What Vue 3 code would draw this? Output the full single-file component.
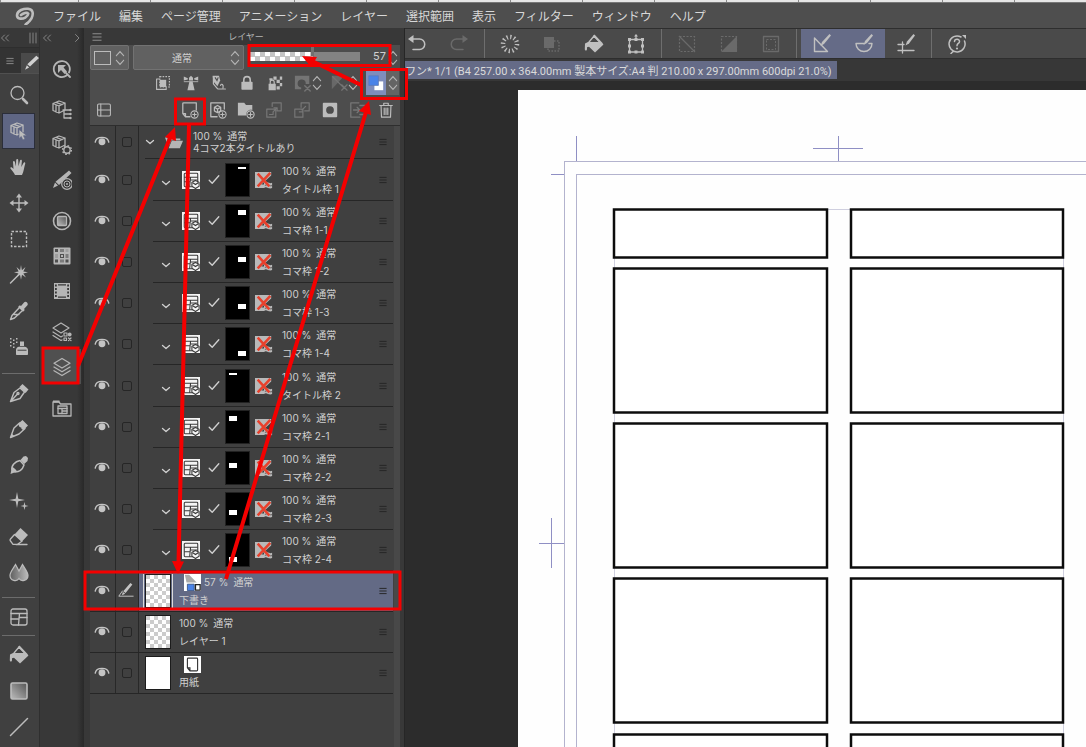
<script setup>
import { ref } from 'vue'

const menus = ['ファイル', '編集', 'ページ管理', 'アニメーション', 'レイヤー', '選択範囲', '表示', 'フィルター', 'ウィンドウ', 'ヘルプ']

const S = (body, width = 1.3) => `<g fill="none" stroke="currentColor" stroke-width="${width}" stroke-linejoin="round" stroke-linecap="round">${body}</g>`
const F = (body) => `<g fill="currentColor">${body}</g>`
const cube = '<path d="M2 4.500 8 2l6 2v7l-6 3-6-2.500zM2 4.500l6 2.500 6-3M8 7v7M5 3.300l6 2.400M5 6v7"/>'

const icons = {
  logo: '<path fill="none" stroke="currentColor" stroke-width="2.600" stroke-linejoin="round" stroke-linecap="round" d="M11 17c5-3 7.500-8 6.500-12C16.500 1 10.500 1 6 3 1 5.500 1 10.500 4.500 11.500c4 .8 8.500-1.800 8.800-4.800C12 5 8.500 6 6 8"/><path fill="currentColor" d="m12.500 14.500 1.500 2-3.500 2-1.500-1z"/>',
  zoom: S('<circle cx="8.500" cy="8" r="6.500"/>') + S('<path d="m14 14 4 4"/>', 2.6),
  object: S(cube) + F('<path d="M10 8.500v9l2.300-2 1.500 3.500 2.200-1-1.500-3.300h3.500z" stroke="#5f6684" stroke-width=".7"/>'),
  hand: F('<path d="M6 18c-.7-2.500-4-5-4.800-7 .5-1.200 1.800-.8 3.300 1L4 5c0-1.400 1.600-1.400 1.900 0l1 4.500L7.200 3c.1-1.400 1.900-1.400 2 0l.3 6.300L11 3.500c.4-1.300 2-1 1.900.4l-.6 6 2.200-4c.7-1.200 2.200-.4 1.700.9-1 2.800-1.400 8.200-3.200 11.200z"/>'),
  move: S('<path d="M10 3v14M3 10h14"/>', 1.4) + F('<path d="m10 .5 3 4H7zM10 19.500l3-4H7zM.5 10l4-3v6zM19.500 10l-4-3v6z"/>'),
  marquee: '<rect x="2.500" y="2.500" width="15" height="15" fill="none" stroke="currentColor" stroke-width="1.400" stroke-dasharray="2.500 1.500"/>',
  wand: S('<path d="m1.500 18 9-9"/>', 1.5) + F('<path d="m12 0 .9 5.300L16.500 2l-2.200 4.400L19 7.300l-4.700 1.100L17 12.500l-4-2.800-1 5-1-5-4 2.800 2.500-4L5 7.300l4.600-.9L7.500 2l3.600 3.300z"/>'),
  dropper: F('<path d="m12 5 3-3.500c2-2 5 1 3.200 3L15 8l.8 1-1.800 1.800L9 6l1.800-1.800z"/>') + S('<path d="m10 7-7 7.500-1.500 4 4-1.500L13 10M5 13.500h5"/>', 1.4),
  spray: F('<path d="M7 17v-4c0-2 1.500-3.300 3-3.300h5.500c1.800 0 3.500 1.300 3.500 3.300v4c0 .8-.5 1-1 1H8c-.7 0-1-.4-1-1z"/><path d="M11 4.500h4V9h-4z"/><path d="M1 1h1.500v1.500H1zM4 2.500h1.500V4H4zM1 4.500h1.500V6H1zM4 6h1.500v1.500H4zM7 4.500h1.500V6H7zM1 8h1.500v1.500H1zM4 9.500h1.500V11H4zM7 1h1.500v1.500H7z"/><path fill="#404040" d="M8.500 12.700h9v1h-9z"/>'),
  pen: S('<path d="M1.500 18.500 5 9.500l6-4.500 4.500 4-4.500 6.500zM2 18l6.500-7"/><circle cx="9" cy="10.500" r="1"/>', 1.4) + F('<path d="m10.500 4 3-3 6 5.500-3 3.500z"/>'),
  pencil: S('<path d="M1.500 18.500 5 9l5.500-5 5.500 5.500-6 5.500z"/>', 1.4) + F('<path d="m9.500 4.500 4-3.500 5.500 5.500-4.500 4.500c-2-.4-2.200-1.200-2.200-2.500-1.300 0-2.600-.7-2.800-4zM1.500 18.500l1.400-3.800 2.300 2.300z"/>'),
  brush: S('<path d="M3 15C2 10.500 6 6.500 11 5.500l4 4.500c-1.500 4.500-5 7-9 7z"/>', 1.5) + F('<path d="m11.500 5 3-3.500L17 1l2 2-.5 3-3.300 3zM3 12c2.500 1 4 2.500 5 4.500L1.500 19z"/>'),
  sparkle: F('<path d="m8 1 1.300 6.700L16 9l-6.700 1.300L8 17l-1.300-6.700L0 9l6.700-1.300zM15.500 11l.8 3.200 3.200.8-3.200.8-.8 3.200-.8-3.200-3.200-.8 3.200-.8z"/>'),
  eraser: F('<path d="m5.500 7.500 6-6.500 7.500 7-6 6.500z"/>') + S('<path d="m5.500 7.500-4 4.500c-.6.700-.6 1.300 0 2L4 17.300h4.500l4.500-3zM7 17.500h11" />', 1.3),
  blur: '<defs><linearGradient id="drop"><stop stop-color="currentColor" stop-opacity=".25"/><stop offset="1" stop-color="currentColor"/></linearGradient></defs><path d="M6.500 1.500C4 6 1 9 1 12.500 1 18 8 19 10 15.500c2 3.500 9 2.500 9-3C19 9 16 6 13.500 1.500L10 8z" fill="url(#drop)" stroke="currentColor" stroke-width="1.200"/>',
  frame: S('<rect x="2" y="2" width="16" height="16" rx="2"/><path d="M2 6.500h16M2 12h8M10.500 6.500 9.500 18M10 10.500h8"/>'),
  fill: S('<path d="M5 8 10 2l5 5"/>') + F('<path d="M1 9.500 4 8h12.500l3 2.500-8.500 8-6-5.800-2 .5V15c0 2-2.200 2-2.200 0z"/><path d="m9 2 1.500-1.500 8.500 9-2 1z"/>'),
  gradient: '<defs><linearGradient id="grad" x1="1" y1="0" x2="0" y2="1"><stop stop-color="#555"/><stop offset="1" stop-color="currentColor"/></linearGradient></defs><rect x="2" y="2" width="16" height="16" rx="1.500" fill="url(#grad)" stroke="currentColor" stroke-width="1.600"/>',
  line: S('<path d="M1.500 18.500 18.500 1.500"/>', 1.5),

  quick: S('<path d="M14.500 16.500A8 8 0 1 1 17 13.500M14 14l4 4"/>', 1.8) + F('<path d="M6 6h8l-2.500 2.500 3.500 4-2.500 2.500L9 11l-3 3z"/>'),
  subtool: S('<g transform="translate(-1 -1)">' + cube + '</g><path d="M11 10h7M13 14h5M13 18h5M12 10v8h2"/>') + F('<circle cx="18.500" cy="10" r="1.200"/><circle cx="18.500" cy="14" r="1.200"/><circle cx="18.500" cy="18" r="1.200"/>'),
  property: S('<g transform="translate(-1 -1)">' + cube + '</g>') + '<circle cx="15" cy="15" r="3.200" fill="#383838" stroke="currentColor" stroke-width="1.400"/><circle cx="15" cy="15" r="4.400" fill="none" stroke="currentColor" stroke-width="1.500" stroke-dasharray="1.600 1.850"/>',
  brushsize: F('<path d="M17 .5 19.500 3 7 15l-3.500-3.200zM3 12.500l3 3L1 18z"/>') + '<circle cx="15" cy="14" r="5.300" fill="#383838" stroke="currentColor" stroke-width="1.200"/><circle cx="15" cy="14" r="3" fill="none" stroke="currentColor"/><circle cx="15" cy="14" r="1" fill="currentColor"/>',
  wheel: S('<circle cx="10" cy="10" r="8.500"/>', 1.6) + '<rect x="5.500" y="5.500" width="9" height="9" rx="1" fill="url(#grad)" stroke="currentColor" stroke-width="1.300"/>',
  swatches: F('<rect x="1.500" y="1.500" width="17" height="17" rx="1"/>') + '<g fill="#444"><path d="M3 3h3v3H3zM8 8h4v4H8zM3 13.500h3v3H3zM13.500 13.500h3v3h-3z" opacity=".9"/><path d="M8 3h4v3H8zM13.500 8h3v4h-3zM8 13.500h4v3H8z" opacity=".5"/><path d="M3 8h3v4H3zM13.500 3h3v3h-3z" opacity=".2"/></g><path fill="currentColor" d="M9 9h2v2H9z"/>',
  film: F('<path fill-rule="evenodd" d="M2 2h16v16H2zM3 3.500v2h1.800v-2zM3 7v2h1.800V7zM3 10.500v2h1.800v-2zM3 14v2h1.800v-2zM15.200 3.500v2H17v-2zM15.200 7v2H17V7zM15.200 10.500v2H17v-2zM15.200 14v2H17v-2zM6 3.200v1.300h8V3.200zM6 15.500v1.300h8v-1.300z"/>'),
  layerprop: S('<path d="m9 1 8 5-8 5-8-5zM1 10l8 5 1.500-1M1 13.500 9 18.500l1-.6M12 11h3v3h-3zM12 16h2.500v2.500H12z"/><path d="m16.500 16 2.500 2.500m0-2.500-2.500 2.500"/>', 1.2) + F('<circle cx="17.700" cy="12.500" r="1.900"/>'),
  layers: S('<path d="m10 1.500 8 4.700-8 4.800-8-4.800zM2 10l8 4.800L18 10M2 13.700l8 4.800 8-4.800"/>'),
  materials: S('<path d="M1 17V4h6l1.500 2H19v12H1z"/><rect x="6" y="8" width="9" height="7.500"/><path d="M6 10.500h9M10 10.500v5M10 13h5"/>', 1.3) + F('<path d="M1 2.500h6.500v2H1z"/>'),

  undo: S('<path d="M5 5h7.500a4.700 4.700 0 0 1 0 10.500H6"/>', 1.5) + F('<path d="M6.500 1v8L1 5z"/>'),
  redo: S('<path d="M15 5H7.500a4.700 4.700 0 0 0 0 10.500H14"/>', 1.5) + F('<path d="M13.500 1v8L19 5z"/>'),
  burst: '<circle cx="10" cy="10" r="7" fill="none" stroke="currentColor" stroke-width="4.500" stroke-dasharray="1.300 2.365"/>',
  copybox: F('<path d="M2 3h10v11H2z"/>') + '<rect x="6" y="7" width="11" height="10" fill="none" stroke="currentColor" stroke-width="1.500" stroke-dasharray="1.500 1.500"/>',
  transform: S('<rect x="3.500" y="5.500" width="13" height="12.500"/><path d="M10 5V1.500"/>') + F('<path d="M2 4h3v3H2zM8.500 4h3v3h-3zM15 4h3v3h-3zM2 10.500h3v3H2zM15 10.500h3v3h-3zM2 16.500h3v3H2zM8.500 16.500h3v3h-3zM15 16.500h3v3h-3zM10 0l2 2.500H8z"/>'),
  deselect: '<rect x="2.500" y="2.500" width="15" height="15" fill="none" stroke="currentColor" stroke-width="1.200" stroke-dasharray="2 1.500"/><path d="m2 2 16 16" stroke="currentColor" stroke-width="1.300"/>',
  invert: '<rect x="2.500" y="2.500" width="15" height="15" fill="none" stroke="currentColor" stroke-width="1.200" stroke-dasharray="2 1.500"/><path d="M18 2v16H2z" fill="currentColor"/>',
  border: S('<rect x="2.500" y="2.500" width="15" height="15"/>') + '<rect x="5.500" y="5.500" width="9" height="10" fill="none" stroke="currentColor" stroke-dasharray="2 1.500"/>',
  snapruler: S('<path d="M2.500 4v13.500h13z"/>', 1.4) + F('<path d="m17.500 0 1.500 1.500-7 8.500-3.500 2 1.500-4z"/>'),
  snapspecial: S('<path d="M2 9.500h8M15 9.500h3a8 8 0 0 1-16 0"/>', 1.4) + F('<path d="m17.500 0 1.500 1.500-6 7.500-3.500 2 1.500-4z"/>'),
  snapgrid: S('<path d="M2 10.500h6M2 16.500h16M6.500 8v11"/>', 1.3) + F('<path d="m17.500 0 1.500 1.500-6 8-3.500 2 1.500-4z"/>'),
  help: S('<path d="M14 3a8 8 0 1 0 3.500 4M6 17.500 4 19.500"/><path d="M7.500 7.500c.3-3 5.300-2.800 5 .2-.2 1.800-2.500 1.800-2.500 4"/>', 1.5) + F('<circle cx="10" cy="14.500" r="1.100"/><path d="M15 1h4v4z"/>'),

  clip: '<rect x="6" y="2" width="12" height="13" fill="none" stroke="currentColor" stroke-width="1.500" stroke-dasharray="2 1.500"/>' + S('<path d="M5 5H2v13h12v-2"/>', 1.4) + F('<path d="M6 6h8v9H6z"/>'),
  beacon: F('<path d="M7.500 3.500 10 1l2.500 2.500V7h-5zM8 8h4l2.500 11h-9zM1 2l5 2v1.500L1 7zM19 2l-5 2v1.500L19 7z"/><path d="M1 7.500h18V9H1z" opacity=".7"/>'),
  draft: F('<path d="M2 1h8l1.500 6-3.500 7-5-6z"/>') + S('<path d="M3 2v9l5 6M9 17.500h9M12 13c1-3 4-1 3 3"/>', 1.5) + '<path d="m5 3 2.500 4L9 3" fill="none" stroke="#4d4d4d" stroke-width="1.400"/>',
  lock: F('<rect x="3" y="8.500" width="14" height="10" rx="1"/>') + S('<path d="M6 9V6a4 4 0 0 1 8 0v3"/>', 2),
  lockalpha: F('<path d="M8 2h4v4H8zM12 6h4v4h-4zM16 2h3v4h-3zM16 10h3v4h-3zM2 11h9v8H2zM12 14h4v4h-4zM3 4h4v3H3z"/>') + S('<path d="M4 11V9a2.500 2.500 0 0 1 5 0v2"/>', 1.5),
  maskoff: F('<path fill-rule="evenodd" d="M1 2h16v9h-4a4.500 4.500 0 1 0-5 4v2H1z"/>') + S('<path d="m12 13 6 6m0-6-6 6"/>', 1.6),
  ruleroff: F('<path d="M2 2h14L2 17z" opacity=".7"/>') + S('<path d="m3 3 13 13M13 12l6 6m0-6-6 6"/>', 1.4),
  palette: '<path d="M8 8h11v11H8z" fill="#fff"/><path d="M1 1h12v12H1z" fill="#4a83e8" stroke="#5f7bb5"/>',
  split: S('<rect x="2" y="2.500" width="16" height="15" rx="1.500"/><path d="M2 10h16M6 2.500v15"/>'),
  newlayer: S('<path d="M10 17.500H5L2 14V3c0-.7.300-1 1-1h14v8M2 14h3v3.500"/>', 1.4) + S('<circle cx="15" cy="15" r="4"/><path d="M15 13v4M13 15h4"/>', 1.2),
  newvector: S('<path d="M9 17.500H2V2h15v7"/><path d="m6 7 3.500-2L13 7v4l-3.500 2L6 11zM6 7l3.500 2L13 7M9.500 9v4"/>', 1.4) + S('<circle cx="15" cy="15" r="4"/><path d="M15 13v4M13 15h4"/>', 1.2),
  newfolder: F('<path d="M1 2h7l2 2.500h7V10c-4-1-7 2-7 6H1z"/>') + S('<circle cx="15" cy="15" r="4"/><path d="M15 13v4M13 15h4"/>', 1.3),
  transfer: S('<path d="M8 6V2h10v9h-4M2 9h10v9H2zM5 15h4v-3l4-4M10 7.500h3.500V11"/>', 1.3),
  merge: S('<path d="M9 7V2h9v9h-5M2 9h9v9H2zM14 6l-4 4M7 12h4"/>', 1.3),
  mask: F('<path fill-rule="evenodd" d="M3 2h14c.7 0 1 .3 1 1v14c0 .7-.3 1-1 1H3c-.7 0-1-.3-1-1V3c0-.7.3-1 1-1zM10 5.700a4.300 4.300 0 1 0 0 8.600 4.300 4.300 0 0 0 0-8.600z"/>'),
  applymask: S('<path d="M11 2H2v16h10M12 5h6v10h-6M5 10h7m-3-3 3 3-3 3"/>', 1.4),
  trash: S('<path d="M3 5h14M7.500 5V2.500h5V5M4.500 5l.5 13h10l.5-13M8 8v7M10 8v7M12 8v7"/>', 1.3),

  eye: S('<path d="M1.500 11.500c.5-3 3-6 8.500-6s8 3 8.500 6"/>', 1.7) + F('<circle cx="10" cy="11" r="4.300"/>'),
  editpen: F('<path d="m15.500 0 2.500 2-8.500 10.500-3-2.300zM6 11l3 2.300-4 2z"/>') + S('<path d="M5.500 10 1 16.500h18"/>', 1.2),
  chevron: S('<path d="m3 7 7 6 7-6"/>', 2.6),
  check: S('<path d="m2 10.500 5 5L18 3"/>', 2.2),
  folder: F('<path d="M4 4h5l1.500 2H17v2H7L4 15zM7.500 8.500H20L16.500 17H4z"/><path d="M0 5h3v8z"/>'),
  framelayer: '<path fill="#f4f4f4" d="M0 0h20v20H0z"/><g fill="none" stroke="#3a3a3a" stroke-width="1.200"><rect x="2.500" y="2.500" width="15" height="15" rx="1"/><path d="M2.500 7h15M2.500 12h6M9.500 7 8.500 17.500M9 10h8"/></g><path fill="#f4f4f4" stroke="#3a3a3a" stroke-width="1.200" d="m15 10.500 4 2v4.500l-4 2.500-4-2.500v-4.500zM12 13l3 2 3-2"/>',
  rulerx: '<path fill="#b9b9b9" d="M0 1h18v4L7 15h3v4H0z"/><path fill="#b9b9b9" d="M10 13c3-3 5 2 9 0v6c-4 2-6-3-9 0z"/><path fill="none" stroke="#555" d="M11 16c3-2 5 1.500 8 .3"/><path fill="none" stroke="#e8402c" stroke-width="2.800" d="m3 3 13 14M17 2 3 17"/>',
  colorlayer: '<path fill="#fff" d="M0 0h20v20H0z"/><path fill="#aaa" d="M1 1h5l9 9H3z"/><path fill="#4a83e8" stroke="#34507f" d="M4 12h8v7.500H4z"/><path fill="#fff" stroke="#222" stroke-width="1.500" d="M13.500 12.500H19V19h-5.500z"/>',
  paper: '<path fill="#fff" d="M0 0h20v20H0z"/><path fill="none" stroke="#333" stroke-width="1.300" d="M5 2.500h10c.8 0 1 .3 1 1v13c0 .8-.3 1-1 1H7L4 14V3.500c0-.7.300-1 1-1zM4 14h3v3.500"/>',
  updown: '<g fill="none" stroke="currentColor" stroke-width="1.800"><path d="m2 7.500 8-5.500 8 5.500M2 12.500l8 5.500 8-5.500"/></g>',
  bars: '<path fill="none" stroke="currentColor" stroke-width="2.400" d="M1 3.500h18M1 10h18M1 16.500h18"/>',
  back: S('<path d="m9 4-6 6 6 6M17 4l-6 6 6 6"/>', 1.8),
  next: S('<path d="m7 3 7 7-7 7"/>', 1.8),
  grip: '<path stroke="currentColor" stroke-width="1.500" d="M5 1v18M10 1v18M15 1v18"/>',
}

const tools = [
  [['zoom', '虫めがね'], ['object', '操作'], ['hand', '手のひら'], ['move', 'レイヤー移動'], ['marquee', '選択範囲'], ['wand', '自動選択'], ['dropper', 'スポイト'], ['spray', 'エアブラシ']],
  [['pen', 'ペン'], ['pencil', '鉛筆'], ['brush', '筆'], ['sparkle', 'デコレーション'], ['eraser', '消しゴム'], ['blur', '色混ぜ']],
  [['frame', 'コマ枠']],
  [['fill', '塗りつぶし'], ['gradient', 'グラデーション'], ['line', '直線']],
]

const palettes = [
  ['quick'],
  ['subtool', 'property', 'brushsize'],
  ['wheel', 'swatches', 'film'],
  ['layerprop', 'layers'],
  ['materials'],
]

const commands = [
  [['undo'], ['redo', 'dim']],
  [['burst'], ['copybox', 'dim'], ['fill'], ['transform']],
  [['deselect', 'dim'], ['invert', 'dim'], ['border', 'dim']],
  [['snapruler', 'on'], ['snapspecial', 'on'], ['snapgrid']],
  [['help']],
]

const layerActions = [['newlayer'], ['newvector'], ['newfolder'], ['transfer', 'dim'], ['merge', 'dim'], ['mask'], ['applymask', 'dim'], ['trash']]

const frameLayers = [
  { name: 'タイトル枠 1', x: 13, y: 4, h: 2, title: true },
  { name: 'コマ枠 1-1', x: 13, y: 6, h: 5 },
  { name: 'コマ枠 1-2', x: 13, y: 12, h: 5 },
  { name: 'コマ枠 1-3', x: 13, y: 18, h: 5 },
  { name: 'コマ枠 1-4', x: 13, y: 24, h: 5 },
  { name: 'タイトル枠 2', x: 4, y: 4, h: 2, title: true },
  { name: 'コマ枠 2-1', x: 4, y: 6, h: 5 },
  { name: 'コマ枠 2-2', x: 4, y: 12, h: 5 },
  { name: 'コマ枠 2-3', x: 4, y: 18, h: 5 },
  { name: 'コマ枠 2-4', x: 4, y: 24, h: 5 },
]

const flatLayers = [
  { name: '下書き', opacity: '57 %', icon: 'colorlayer', selected: true },
  { name: 'レイヤー 1', opacity: '100 %' },
  { name: '用紙', icon: 'paper', solid: true },
]

const panels = [
  { y: 119, h: 48 }, { y: 178, h: 144 }, { y: 333, h: 144 }, { y: 488, h: 144 }, { y: 644, h: 144 },
]

const opacity = ref(57)
const blend = ref('通常')
</script>

<template>
  <div class="app">
    <div class="strip"></div>
    <header class="menubar">
      <svg class="logo" viewBox="0 0 20 18" v-html="icons.logo"></svg>
      <nav class="menus">
        <button v-for="m in menus" :key="m">{{ m }}</button>
      </nav>
    </header>

    <div class="work">
      <aside class="toolbox">
        <div class="dock-head">
          <svg class="i10" viewBox="0 0 20 20" v-html="icons.back"></svg>
          <svg class="i12" viewBox="0 0 20 20" v-html="icons.grip"></svg>
        </div>
        <div class="tabs">
          <svg class="i8" viewBox="0 0 20 20" v-html="icons.bars"></svg>
          <span class="tab"><svg class="i18" viewBox="0 0 20 20"><path d="m17 2 3 2.500L10 14l-3-2.500zM6.500 12.500 9 15l-4.500 2.500z" fill="currentColor" /></svg></span>
        </div>
        <div v-for="(group, g) in tools" :key="g" class="tool-group">
          <button v-for="t in group" :key="t[0]" class="tool" :class="{ on: t[0] === 'object' }" :aria-label="t[1]">
            <svg class="i20" viewBox="0 0 20 20" v-html="icons[t[0]]"></svg>
          </button>
        </div>
      </aside>

      <aside class="palettes">
        <div class="dock-head">
          <svg class="i10" viewBox="0 0 20 20" v-html="icons.back"></svg>
          <svg class="i10" viewBox="0 0 20 20" v-html="icons.next"></svg>
        </div>
        <div class="palette-list">
          <div v-for="(group, g) in palettes" :key="g">
            <button v-for="p in group" :key="p" class="palette" :class="{ on: p === 'layers' }" :aria-label="p">
              <svg class="i20" viewBox="0 0 20 20" v-html="icons[p]"></svg>
            </button>
          </div>
        </div>
      </aside>

      <section class="panel">
        <div class="panel-head">
          <svg class="i10" viewBox="0 0 20 20" v-html="icons.bars"></svg>
          <h2>レイヤー</h2>
        </div>
        <div class="controls">
          <div class="row-one">
            <button class="swatch" aria-label="パレットカラー">
              <span class="swatch-box"></span>
              <svg class="ud" viewBox="0 0 20 20" preserveAspectRatio="none" v-html="icons.updown"></svg>
            </button>
            <label class="blend">
              <select v-model="blend" aria-label="合成モード"><option>通常</option></select>
              <svg class="ud" viewBox="0 0 20 20" preserveAspectRatio="none" v-html="icons.updown"></svg>
            </label>
            <input class="slider" type="range" min="0" max="100" v-model="opacity" aria-label="不透明度" />
            <input class="value" type="text" v-model="opacity" aria-label="不透明度の値" />
            <svg class="ud" viewBox="0 0 20 20" preserveAspectRatio="none" v-html="icons.updown"></svg>
          </div>
          <div class="row-two">
            <button v-for="n in ['clip', 'beacon', 'draft', 'lock', 'lockalpha']" :key="n" class="cell" :aria-label="n">
              <svg class="i16" viewBox="0 0 20 20" v-html="icons[n]"></svg>
            </button>
            <button v-for="n in ['maskoff', 'ruleroff']" :key="n" class="combo" :aria-label="n">
              <svg class="i18 dim" viewBox="0 0 20 20" v-html="icons[n]"></svg>
              <svg class="ud" viewBox="0 0 20 20" preserveAspectRatio="none" v-html="icons.updown"></svg>
            </button>
            <button class="color-on" aria-label="レイヤーカラー"><svg class="i16" viewBox="0 0 20 20" v-html="icons.palette"></svg></button>
            <button class="color-more" aria-label="レイヤーカラー設定"><svg class="ud" viewBox="0 0 20 20" preserveAspectRatio="none" v-html="icons.updown"></svg></button>
          </div>
          <div class="row-three">
            <button class="cell first" aria-label="2ペイン表示"><svg class="i16" viewBox="0 0 20 20" v-html="icons.split"></svg></button>
            <button v-for="a in layerActions" :key="a[0]" class="cell" :class="a[1]" :aria-label="a[0]">
              <svg class="i18" viewBox="0 0 20 20" v-html="icons[a[0]]"></svg>
            </button>
          </div>
        </div>

        <div class="list-wrap">
          <ul class="list">
            <li class="layer parent">
              <button class="eye" aria-label="表示"><svg class="i16" viewBox="0 0 20 20" v-html="icons.eye"></svg></button>
              <span class="tick"><input type="checkbox" aria-label="4コマ2本タイトルあり" /></span>
              <div class="body folder-body">
                <svg class="i10" viewBox="0 0 20 20" v-html="icons.chevron"></svg>
                <svg class="i18 light" viewBox="0 0 20 20" v-html="icons.folder"></svg>
                <div class="text"><span class="mode"><span>100 %</span><span>通常</span></span><span>4コマ2本タイトルあり</span></div>
                <svg class="i8 dark" viewBox="0 0 20 20" v-html="icons.bars"></svg>
              </div>
            </li>
            <li v-for="l in frameLayers" :key="l.name" class="layer" :class="{ title: l.title }">
              <button class="eye" aria-label="表示"><svg class="i16" viewBox="0 0 20 20" v-html="icons.eye"></svg></button>
              <span class="tick"><input type="checkbox" :aria-label="l.name" /></span>
              <div class="body frame-body">
                <svg class="i10" viewBox="0 0 20 20" v-html="icons.chevron"></svg>
                <svg class="i18" viewBox="0 0 20 20" v-html="icons.framelayer"></svg>
                <svg class="i12" viewBox="0 0 20 20" v-html="icons.check"></svg>
                <svg class="mini" viewBox="0 0 25 34"><rect width="25" height="34" fill="#222" /><rect x="1" y="1" width="23" height="32" fill="#000" /><rect :x="l.x" :y="l.y" width="8" :height="l.h" fill="#fff" /></svg>
                <svg class="i18" viewBox="0 0 20 20" v-html="icons.rulerx"></svg>
                <div class="text"><span class="mode"><span>100 %</span><span>通常</span></span><span>{{ l.name }}</span></div>
                <svg class="i8 dark" viewBox="0 0 20 20" v-html="icons.bars"></svg>
              </div>
            </li>
            <li v-for="l in flatLayers" :key="l.name" class="layer flat" :class="{ selected: l.selected }">
              <button class="eye" aria-label="表示"><svg class="i16" viewBox="0 0 20 20" v-html="icons.eye"></svg></button>
              <span class="tick">
                <svg v-if="l.selected" class="i16" viewBox="0 0 20 20" v-html="icons.editpen"></svg>
                <input v-else type="checkbox" :aria-label="l.name" />
              </span>
              <div class="body flat-body">
                <span class="thumb-wrap"><span class="thumb" :class="{ solid: l.solid }"></span></span>
                <div class="text">
                  <span class="mode">
                    <svg v-if="l.icon" class="badge" viewBox="0 0 20 20" v-html="icons[l.icon]"></svg>
                    <template v-if="l.opacity"><span>{{ l.opacity }}</span><span>通常</span></template>
                  </span>
                  <span>{{ l.name }}</span>
                </div>
                <svg class="i8 dark" viewBox="0 0 20 20" v-html="icons.bars"></svg>
              </div>
            </li>
          </ul>
        </div>
      </section>

      <main class="document">
        <div class="commandbar">
          <div v-for="(group, g) in commands" :key="g" class="cmd-group">
            <button v-for="c in group" :key="c[0]" class="cmd" :class="c[1]" :aria-label="c[0]">
              <svg class="i20" viewBox="0 0 20 20" v-html="icons[c[0]]"></svg>
            </button>
          </div>
        </div>
        <div class="doc-tabs">
          <button class="doc-tab">ワン* 1/1 (B4 257.00 x 364.00mm 製本サイズ:A4 判 210.00 x 297.00mm 600dpi 21.0%)</button>
        </div>
        <div class="stage">
          <svg class="page" aria-label="原稿用紙">
            <g fill="none" stroke="#b3b3ce" shape-rendering="crispEdges">
              <path d="M46.500 1000V71.500H3000M58.500 1000V84.500H3000" />
              <path stroke="#8f8fc4" d="M58.500 46v25M33 84.500h13M295 58.500h50M320.500 46v25M21 453.500h25M33.500 428v50" />
              <path stroke="#cfcfdf" d="M96.500 119v800M545.500 119v800M96 119.500h450" />
            </g>
            <g fill="#fff" stroke="#0c0c0c" stroke-width="2.500">
              <template v-for="p in panels" :key="p.y">
                <rect x="96" :y="p.y + 0.5" width="213" :height="p.h" />
                <rect x="333" :y="p.y + 0.5" width="212" :height="p.h" />
              </template>
            </g>
          </svg>
        </div>
      </main>
    </div>

    <svg class="notes" aria-hidden="true">
      <g fill="none" stroke="#f40000" stroke-width="3">
        <rect x="249" y="45.500" width="141" height="20" />
        <rect x="361.500" y="69.500" width="45" height="29" />
        <rect x="175.500" y="99" width="29" height="25" />
        <rect x="43" y="348" width="35" height="35" />
        <rect x="85" y="572" width="315" height="37" />
      </g>
      <g stroke="#f40000" stroke-width="4">
        <path d="M78 366 170 138M189 125 178.500 563M226 579 366 112M361 85 312 61" />
      </g>
      <g fill="#f40000">
        <path d="m175 127 1 14-11-4zM178 574l-6-13 12 .5zM369 101l2 14-12-4zM302 56l15 1-6 10z" />
      </g>
    </svg>
  </div>
</template>

<style>
body {
  background: #2c2c2c;
}
</style>

<style scoped>
.app {
  position: relative;
  display: flex;
  flex-direction: column;
  height: 100vh;
  overflow: hidden;
  background: #2c2c2c;
  color: #d0d0d0;
  font-family: Inter, "Noto Sans CJK JP", sans-serif;
  font-size: 10px;
}
button, select, input {
  margin: 0;
  padding: 0;
  border: 0;
  background: none;
  color: inherit;
  font: inherit;
}
button {
  display: flex;
  align-items: center;
  justify-content: center;
}
svg { display: block; flex: none; }
.i8 { width: 8px; height: 8px; }
.i10 { width: 10px; height: 10px; }
.i12 { width: 12px; height: 12px; }
.i16 { width: 16px; height: 16px; }
.i18 { width: 18px; height: 18px; }
.i20 { width: 20px; height: 20px; }
.ud { width: 10px; height: 16px; color: #b5b5b5; }
.dim { color: #747474; }
.dark { color: #262626; }
.light { color: #b5b5b5; }

.strip {
  flex: none;
  height: 2px;
  background: repeating-linear-gradient(90deg, #e6e6e6 0 71px, #8a8a8a 71px 72px);
  background-position: 7px 0;
  border-bottom: 1px solid #777;
}
.menubar {
  flex: none;
  display: flex;
  align-items: center;
  gap: 18px;
  height: 25px;
  padding-left: 15px;
  background: #4e4e4e;
}
.logo { width: 20px; height: 18px; color: #bdbdbd; }
.menus { display: flex; gap: 18px; font-size: 12px; color: #d8d8d8; white-space: nowrap; }
.work { flex: 1; display: flex; min-height: 0; }

.toolbox {
  flex: none;
  width: 39px;
  overflow: hidden;
  background: #404040;
  color: #bcbcbc;
}
.dock-head {
  display: flex;
  align-items: center;
  justify-content: space-between;
  height: 19px;
  background: #383838;
  border-bottom: 1px solid #2e2e2e;
  color: #8c8c8c;
}
.tabs {
  display: flex;
  align-items: center;
  justify-content: space-between;
  height: 25px;
  margin-bottom: 3px;
  padding-left: 6px;
  background: #333;
  border-bottom: 1px solid #505050;
  color: #8c8c8c;
}
.tab {
  display: flex;
  align-items: center;
  width: 18px;
  height: 20px;
  align-self: flex-end;
  background: #4a4a4a;
  color: #d0d0d0;
}
.tool-group { margin: 0 4px 0 2px; }
.tool-group + .tool-group { border-top: 1px solid #6c6c6c; padding-top: 1px; }
.tool-group:nth-of-type(3) { padding-bottom: 8px; }
.tool-group:nth-of-type(4) { padding-bottom: 6px; }
.tool { width: 33px; height: 36px; }
.tool.on { background: #5f6684; box-shadow: inset 0 0 0 1px #2b2e3a; }

.palettes {
  flex: none;
  width: 45px;
  background: linear-gradient(90deg, #2f2f2f 0 1px, #383838 1px 38px, #292929 45px);
  color: #b5b5b5;
}
.palettes .dock-head { padding: 0 2px 0 3px; background: none; border-color: transparent; }
.palette-list { display: flex; flex-direction: column; gap: 6px; padding: 3px 0 0 4px; }
.palette { width: 38px; height: 35px; }
.palette.on { background: #505050; }

.panel {
  flex: none;
  display: flex;
  flex-direction: column;
  width: 321px;
  padding: 0 4px 0 6px;
  box-sizing: border-box;
  background: #383838;
  border-right: 1px solid #262626;
}
.panel-head {
  flex: none;
  display: grid;
  grid-template-columns: 12px 1fr 12px;
  align-items: center;
  height: 17px;
  padding-left: 2px;
  color: #8c8c8c;
}
.panel-head h2 { margin: 0; font-size: 9px; font-weight: 400; text-align: center; color: #b5b5b5; }
.controls { flex: none; background: #4d4d4d; border-bottom: 1px solid #2e2e2e; }
.controls .cell { width: 28px; height: 26px; color: #bcbcbc; }
.controls .cell.dim { color: #777; }
.row-one { display: flex; align-items: center; height: 25px; }
.swatch {
  gap: 4px;
  width: 39px;
  height: 25px;
  margin-right: 4px;
  background: #616161;
  border: 1px solid #727272;
  border-radius: 2px;
}
.swatch-box { width: 15px; height: 12px; border: 1px solid #bcbcbc; }
.blend {
  display: flex;
  align-items: center;
  box-sizing: border-box;
  width: 111px;
  height: 25px;
  margin-right: 6px;
  padding-right: 3px;
  background: #616161;
  border: 1px solid #727272;
  border-radius: 2px;
}
.blend select {
  flex: 1;
  appearance: none;
  text-align-last: center;
  outline: none;
}
.slider {
  appearance: none;
  width: 110px;
  height: 18px;
  margin-top: -4px;
  background: linear-gradient(90deg, transparent 0 57%, #838383 57%) 0 5px / 100% 9px no-repeat,
    repeating-conic-gradient(#fff 0 25%, #c4c4c4 0 50%) 0 5px / 10px 9px repeat-x;
}
.slider::-webkit-slider-thumb { appearance: none; width: 3px; height: 9px; margin-top: -9px; background: #707070; }
.value { width: 26px; margin-right: 2px; margin-top: -3px; font-size: 11px; text-align: right; }
.row-two { display: flex; align-items: center; height: 26px; padding-left: 59px; }
.combo { justify-content: flex-end; width: 36px; height: 24px; padding-right: 3px; }
.color-on { width: 20px; height: 24px; margin-left: 5px; background: #7f8dbb; }
.color-more { width: 13px; height: 24px; background: #646464; }
.row-three { display: flex; align-items: center; height: 27px; padding-bottom: 2px; }
.row-three .first { margin-right: auto; }

.list-wrap { flex: 1; min-height: 0; padding-right: 7px; background: linear-gradient(90deg, #404040 0 304px, #484848 304px); }
.list { margin: 0; padding: 0; list-style: none; }
.layer { display: flex; box-sizing: border-box; height: 41px; }
.layer.parent { height: 33px; }
.layer.title { height: 42px; }
.layer.flat { border-bottom: 1px solid #262626; }
.eye { box-sizing: border-box; width: 26px; padding: 0 2px 3px 0; border-right: 1px solid #282828; color: #c4c4c4; }
.tick {
  display: flex;
  align-items: center;
  justify-content: center;
  box-sizing: border-box;
  width: 23px;
  padding-bottom: 1px;
  border-right: 1px solid #282828;
  color: #c4c4c4;
}
.tick input { appearance: none; width: 10px; height: 10px; border: 1px solid #262626; border-radius: 2px; }
.selected .tick { padding-right: 3px; }
.body { flex: 1; display: grid; align-items: center; border-bottom: 1px solid #262626; }
.folder-body { grid-template-columns: 20px 28px 1fr 14px; margin-left: 14px; padding-left: 0; }
.folder-body { margin-left: 6px; }
.frame-body { grid-template-columns: 21px 26px 17px 30px 27px 1fr 14px; margin-left: 14px; padding-left: 8px; }
.frame-body > .i10 { margin-top: 6px; }
.flat-body { grid-template-columns: 40px 1fr 14px; border-bottom: 0; }
.text { display: flex; flex-direction: column; line-height: 18px; white-space: nowrap; }
.folder-body .text { line-height: 12px; }
.mode { display: flex; align-items: center; gap: 5px; }
.mini { width: 25px; height: 34px; }
.badge { width: 17px; height: 17px; margin-left: 5px; }
.selected .mode .badge + span { margin-left: -2px; }
.selected .body { background: #636a85; }
.thumb-wrap { display: flex; justify-content: center; width: 30px; margin-left: 4px; box-sizing: border-box; }
.selected .thumb-wrap { border: solid #dcdcdc; border-width: 0 1px; }
.thumb {
  width: 24px;
  height: 32px;
  border: 1px solid #1c1c1c;
  background: repeating-conic-gradient(#fff 0 25%, #ccc 0 50%) 0 0 / 8px 8px;
  box-sizing: content-box;
}
.thumb.solid { background: #fff; }

.document { flex: 1; display: flex; flex-direction: column; min-width: 0; }
.commandbar {
  flex: none;
  display: flex;
  align-items: center;
  height: 31px;
  box-sizing: border-box;
  background: #4a4a4a;
  border: solid #2e2e2e;
  border-width: 1px 0;
  color: #c0c0c0;
}
.cmd-group { display: flex; height: 100%; align-items: center; }
.cmd-group + .cmd-group::before { content: ""; width: 1px; height: 100%; margin: 0 4px; background: #6e6e6e; }
.cmd { width: 42px; height: 29px; }
.cmd-group:first-child { gap: 18px; padding-right: 9px; }
.cmd-group:first-child .cmd { width: 24px; }
.cmd.on { background: #656b87; }
.cmd.dim { color: #6a6a6a; }
.doc-tabs { flex: none; height: 20px; background: #373737; padding-top: 2px; }
.doc-tab {
  height: 18px;
  padding-right: 5px;
  background: #656b87;
  color: #dadada;
  font-family: Roboto, "Noto Sans CJK JP", sans-serif;
  font-size: 11px;
  white-space: nowrap;
}
.stage { flex: 1; display: flex; min-height: 0; padding: 9px 0 0 113px; background: #2c2c2c; }
.page { flex: 1; min-width: 0; background: #fefefe; overflow: hidden; }

.notes { position: absolute; inset: 0; width: 100%; height: 100%; pointer-events: none; }
</style>
